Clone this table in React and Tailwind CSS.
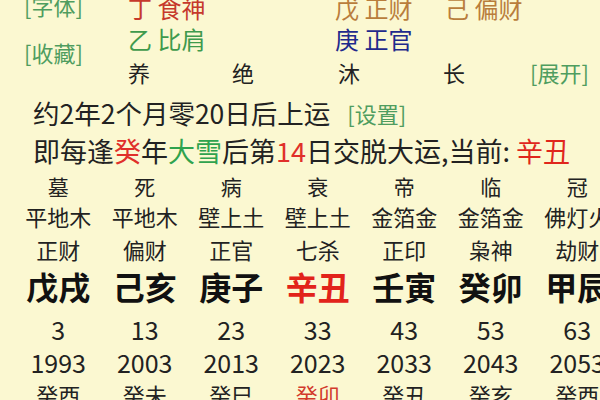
const cols = [
  { zs: '墓', ny: '平地木', ss: '正财', gz: '戊戌', age: 3, year: 1993, ln: '癸酉' },
  { zs: '死', ny: '平地木', ss: '偏财', gz: '己亥', age: 13, year: 2003, ln: '癸未' },
  { zs: '病', ny: '壁上土', ss: '正官', gz: '庚子', age: 23, year: 2013, ln: '癸巳' },
  { zs: '衰', ny: '壁上土', ss: '七杀', gz: '辛丑', age: 33, year: 2023, ln: '癸卯', now: true },
  { zs: '帝', ny: '金箔金', ss: '正印', gz: '壬寅', age: 43, year: 2033, ln: '癸丑' },
  { zs: '临', ny: '金箔金', ss: '枭神', gz: '癸卯', age: 53, year: 2043, ln: '癸亥' },
  { zs: '冠', ny: '佛灯火', ss: '劫财', gz: '甲辰', age: 63, year: 2053, ln: '癸酉' },
];

function Row({ h, className, render }) {
  return (
    <div className={`grid grid-cols-[repeat(7,86.5px)] pl-[15px] leading-none ${h} ${className}`}>
      {cols.map((c, i) => (
        <div key={i} className="flex items-center justify-center">
          {render(c)}
        </div>
      ))}
    </div>
  );
}

export default function App() {
  return (
    <div
      className="w-[600px] h-[400px] overflow-hidden whitespace-nowrap bg-[#fbf8d1] text-[#222]"
      style={{ fontFamily: '"Noto Sans CJK SC", "Noto Sans", sans-serif' }}
    >
      {/* top block */}
      <div className="flex -mt-[11px] h-[100px]">
        <div className="w-[128px] pl-[24px] flex flex-col text-[22px] text-[#4f9d5f]">
          <div className="h-[28px] leading-[28px] mt-[2px]">[字体]</div>
          <div className="h-[28px] leading-[28px] mt-[19px]">[收藏]</div>
        </div>
        <div className="flex flex-col text-[24px]">
          <div className="flex h-[34px] pt-[4px] items-center">
            <span className="w-[207px] text-[#c6392c]">丁 食神</span>
            <span className="w-[110px] text-[#b97d3c]">戊 正财</span>
            <span className="text-[#b97d3c]">己 偏财</span>
          </div>
          <div className="flex h-[32px] items-center">
            <span className="w-[207px] text-[#3f9a4c]">乙 比肩</span>
            <span className="text-[#1f2a8c]">庚 正官</span>
          </div>
          <div className="flex h-[36px] items-center text-[22px]">
            <span className="w-[104px]">养</span>
            <span className="w-[106px]">绝</span>
            <span className="w-[105px]">沐</span>
            <span className="w-[87px]">长</span>
            <span className="text-[22px] text-[#4f9d5f]">[展开]</span>
          </div>
        </div>
      </div>

      {/* 起运 */}
      <div className="pl-[33px] mt-[5px]">
        <div className="h-[38px] flex items-center text-[26.5px]">
          约2年2个月零20日后上运
          <span className="ml-[17px] text-[22px] text-[#4f9d5f]">[设置]</span>
        </div>
        <div className="h-[38px] flex items-center text-[27px]">
          即每逢<span className="text-[#e0302a]">癸</span>年<span className="text-[#2fa34e]">大雪</span>后第<span className="text-[#e0302a]">14</span>日交脱大运,当前:&nbsp;<span className="text-[#e0261c]">辛丑</span>
        </div>
      </div>

      {/* 大运 */}
      <div className="mt-[1px]">
        <Row h="h-[30px]" className="text-[21px]" render={(c) => c.zs} />
        <Row h="h-[30px]" className="text-[22px]" render={(c) => c.ny} />
        <Row h="h-[36px]" className="text-[22px]" render={(c) => c.ss} />
        <Row
          h="h-[44px] pb-[6px]"
          className="text-[32px] font-bold"
          render={(c) => <span className={c.now ? 'text-[#e2231a]' : 'text-[#111]'}>{c.gz}</span>}
        />
        <Row h="h-[36px]" className="text-[25px]" render={(c) => c.age} />
        <Row h="h-[30px]" className="text-[25px]" render={(c) => c.year} />
        <Row
          h="h-[34px]"
          className="text-[22px]"
          render={(c) => <span className={c.now ? 'text-[#d23a2c]' : ''}>{c.ln}</span>}
        />
      </div>
    </div>
  );
}
